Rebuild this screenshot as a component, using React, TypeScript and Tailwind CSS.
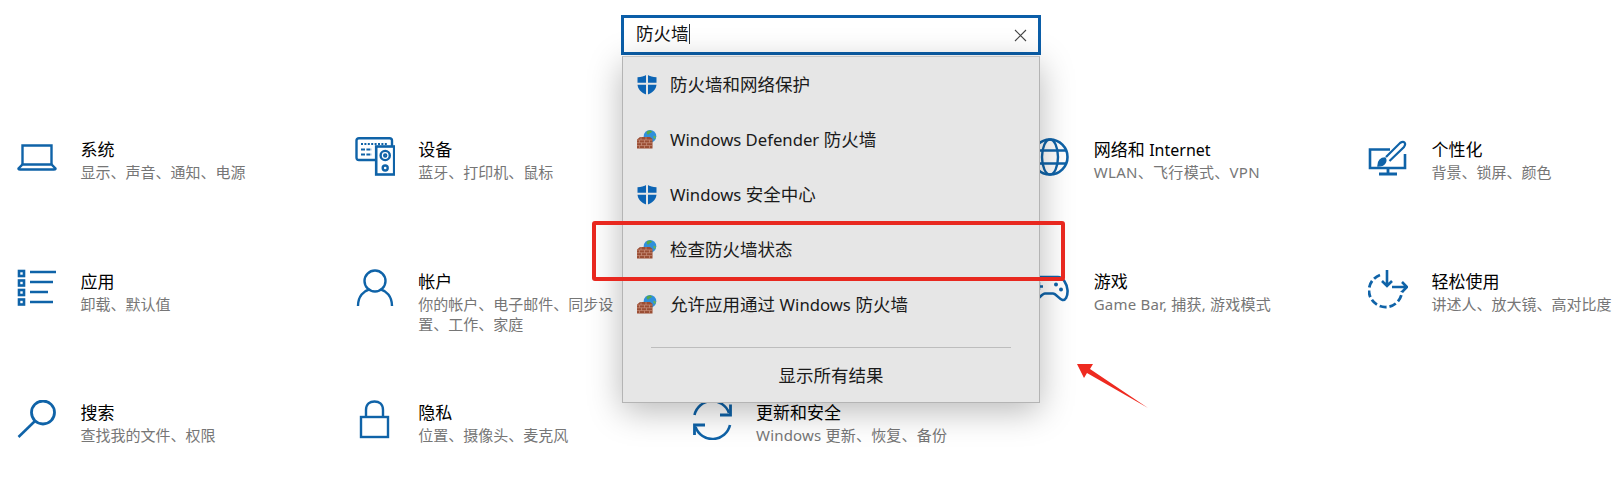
import React from "react";

const blue = "#0f63a8";

function Svg({ children }: { children: React.ReactNode }) {
  return (
    <svg width="40" height="40" viewBox="0 0 40 40" fill="none" stroke={blue} strokeWidth="2.4">
      {children}
    </svg>
  );
}

const Laptop = () => (
  <Svg>
    <path d="M5.5 27.5V8.5H34.5V27.5" />
    <path d="M5.5 27.5H34.5L38.5 31.5Q38.5 32.5 37 32.5H3Q1.5 32.5 1.5 31.5Z" />
  </Svg>
);
const Devices = () => (
  <Svg>
    <path d="M20 23H4Q1.5 23 1.5 20.5V3.5Q1.5 1.2 4 1.2H34.5Q37 1.2 37 3.5V9" />
    <path d="M6 7H33" strokeDasharray="2 1.4" strokeWidth="2.2" />
    <path d="M6 12.5H17M6 17.5H17" strokeDasharray="4 1.4" strokeWidth="2.2" />
    <rect x="21.2" y="9.5" width="18" height="28" fill="#fff" strokeWidth="2.6" />
    <circle cx="30.2" cy="18.5" r="4.6" />
    <circle cx="30.2" cy="18.5" r="1" />
    <circle cx="30.2" cy="31" r="2.5" />
  </Svg>
);
const Apps = () => (
  <Svg>
    <rect x="2" y="2" width="5" height="5" strokeWidth="2.6" />
    <rect x="2" y="11.5" width="5" height="5" strokeWidth="2.6" />
    <rect x="2" y="21" width="5" height="5" strokeWidth="2.6" />
    <rect x="2" y="30.5" width="5" height="5" strokeWidth="2.6" />
    <path d="M13 3H39M13 13H36M13 23H31M13 33H36" />
  </Svg>
);
const Search = () => (
  <Svg>
    <circle cx="26" cy="12.5" r="11.5" strokeWidth="2.8" />
    <path d="M18 21L1.5 37" strokeWidth="2.6" />
  </Svg>
);
const Person = () => (
  <Svg>
    <circle cx="20" cy="12" r="10.5" />
    <path d="M3 37C3 27 9 22 14 20.5M37 37C37 27 31 22 26 20.5" />
  </Svg>
);
const Lock = () => (
  <Svg>
    <rect x="6" y="17" width="27" height="20" />
    <path d="M11 17V10C11 4 15 1.5 19.5 1.5S28 4 28 10V17" />
  </Svg>
);
const Sync = () => (
  <Svg>
    <path d="M1.5 15A18 18 0 0 1 36 13" strokeWidth="2.6" />
    <path d="M37.5 4.5V15H27" strokeWidth="2.8" />
    <path d="M37 25A18 18 0 0 1 2.5 27" strokeWidth="2.6" />
    <path d="M1.5 35V25H12" strokeWidth="2.8" />
  </Svg>
);
const Globe = () => (
  <Svg>
    <circle cx="20" cy="20" r="17.5" strokeWidth="2.6" />
    <ellipse cx="20" cy="20" rx="8" ry="17.5" />
    <path d="M4 13.5H36M4 26.5H36" />
  </Svg>
);
const Pad = () => (
  <Svg>
    <path d="M10 8H28C33 8 37 15 37.5 21C38 28 35 31.5 32.5 31C29 30 26 24.5 23 24.5H15C12 24.5 9 30 6 31C3 31.5 1 28 1.5 21C2 15 5 8 10 8Z" strokeWidth="2.6" />
    <path d="M9 13V21M5 17.5H13" />
    <circle cx="26" cy="15.5" r="2" fill={blue} stroke="none" />
    <circle cx="31" cy="20.5" r="2" fill={blue} stroke="none" />
  </Svg>
);
const Brush = () => (
  <Svg>
    <path d="M22 12.5H2V31H37V17" strokeWidth="2.6" />
    <path d="M20 31V36M11 37H29" strokeWidth="2.8" />
    <path d="M10 29C10 24 13 21 17 21C19 24 17 29 10 29Z" fill={blue} strokeWidth="1.5" />
    <path d="M18 20L32 6Q35 4 36.5 5.5Q38 7 36 10L21.5 24" strokeWidth="2.2" />
  </Svg>
);
const Ease = () => (
  <Svg>
    <path d="M12 6A16.5 16.5 0 1 0 34 22" strokeWidth="2.8" strokeDasharray="7 3" />
    <path d="M19 1V17M14 12L19 17L24 12" strokeWidth="2.6" />
    <path d="M24 18H39M34 13L39 18L34 23" strokeWidth="2.6" />
  </Svg>
);

const Shield = () => (
  <svg width="20" height="21" viewBox="0 0 20 21">
    <path
      d="M10 0.5C7 2.5 4 3.2 0.5 3.2V10C0.5 15 4 18.8 10 20.8C16 18.8 19.5 15 19.5 10V3.2C16 3.2 13 2.5 10 0.5Z"
      fill="#0c64b4"
    />
    <path d="M9 0V21H11V0ZM0 8.8V10.8H20V8.8Z" fill="#e6e6e6" />
  </svg>
);

const Firewall = () => (
  <svg width="20" height="19" viewBox="0 0 20 19">
    <circle cx="13" cy="6.3" r="6.3" fill="#2f8fdc" />
    <path d="M10 1.2C12 0.2 14.5 0.4 15 1.8C14 3 12.5 2.8 11.5 4.5C10 5 9 3 10 1.2Z" fill="#57a84a" />
    <path d="M16.5 6C17.5 5.4 18.8 6.2 18.8 8C18 9.5 16 9 16.5 6Z" fill="#66b35a" />
    <path d="M0 9.5L3 7H13L15.5 9V18.5H0Z" fill="#9a4d33" />
    <path
      d="M0 10H15.5M0 12.8H15.5M0 15.6H15.5M4 7V10M9 7V10M2.5 10V12.8M7.5 10V12.8M12.5 10V12.8M4.5 12.8V15.6M9.5 12.8V15.6M2.5 15.6V18.5M7.5 15.6V18.5M12.5 15.6V18.5"
      stroke="#cc9480"
      strokeWidth="0.7"
      fill="none"
    />
  </svg>
);

function mixed(text: string, latinClass: string) {
  return text.split(/([A-Za-z]+(?: [A-Za-z]+)*)/).map((part, i) =>
    i % 2 === 1 ? (
      <span key={i} className={latinClass}>
        {part}
      </span>
    ) : (
      part
    ),
  );
}

type Cell = { icon: React.ReactNode; title: string; desc: string; track?: string } | null;

const cells: Cell[] = [
  { icon: <Laptop />, title: "系统", desc: "显示、声音、通知、电源" },
  { icon: <Devices />, title: "设备", desc: "蓝牙、打印机、鼠标" },
  null,
  { icon: <Globe />, title: "网络和 Internet", desc: "WLAN、飞行模式、VPN", track: "tracking-[0.3px]" },
  { icon: <Brush />, title: "个性化", desc: "背景、锁屏、颜色" },
  { icon: <Apps />, title: "应用", desc: "卸载、默认值" },
  { icon: <Person />, title: "帐户", desc: "你的帐户、电子邮件、同步设置、工作、家庭" },
  null,
  { icon: <Pad />, title: "游戏", desc: "Game Bar, 捕获, 游戏模式", track: "tracking-[0.2px]" },
  { icon: <Ease />, title: "轻松使用", desc: "讲述人、放大镜、高对比度" },
  { icon: <Search />, title: "搜索", desc: "查找我的文件、权限" },
  { icon: <Lock />, title: "隐私", desc: "位置、摄像头、麦克风" },
  { icon: <Sync />, title: "更新和安全", desc: "Windows 更新、恢复、备份", track: "tracking-[0.2px]" },
];

const results: { icon: React.ReactNode; label: string }[] = [
  { icon: <Shield />, label: "防火墙和网络保护" },
  { icon: <Firewall />, label: "Windows Defender 防火墙" },
  { icon: <Shield />, label: "Windows 安全中心" },
  { icon: <Firewall />, label: "检查防火墙状态" },
  { icon: <Firewall />, label: "允许应用通过 Windows 防火墙" },
];

export default function App() {
  return (
    <div className="relative h-[489px] w-[1624px] overflow-hidden bg-white font-['Noto_Sans','Noto_Sans_CJK_SC',sans-serif]">
      <div className="grid auto-rows-[131.5px] grid-cols-[repeat(4,337.75px)_1fr] pl-[17px] pt-[137px]">
        {cells.map((c, i) =>
          c ? (
            <div key={i} className="flex">
              <div className="h-10 w-[63.5px] shrink-0">{c.icon}</div>
              <div className="w-[200px] pt-px">
                <div className="whitespace-nowrap text-[17px] leading-6 text-black">
                  {mixed(c.title, "text-[16px]")}
                </div>
                <div className={`text-[15px] leading-5 text-[#767676] ${c.track ?? ""}`}>{c.desc}</div>
              </div>
            </div>
          ) : (
            <div key={i} />
          ),
        )}
      </div>

      <div className="absolute left-[621px] top-[15px] w-[420px]">
        <div className="flex h-10 items-center border-[3px] border-[#0b5ea8] bg-white pl-3 pr-[11px]">
          <span className="-mt-[4px] text-[17.5px] leading-6 text-[#111]">防火墙</span>
          <span className="-mt-[2px] h-5 w-px bg-[#333]" />
          <svg className="ml-auto" width="13" height="13" viewBox="0 0 13 13" stroke="#444" strokeWidth="1.1">
            <path d="M1 1L12 12M12 1L1 12" />
          </svg>
        </div>
        <div className="mx-px mt-px h-[347px] border border-[#b4b4b4] border-t-[#c4c4c4] bg-[#e6e6e6] shadow-[0_8px_32px_rgba(0,0,0,0.28)]">
          {results.map((r) => (
            <div key={r.label} className="flex h-[55px] items-center gap-[13px] pl-[14px]">
              <span className="flex w-5 justify-center">{r.icon}</span>
              <span className="-mt-px whitespace-nowrap text-[17.5px] text-[#1a1a1a]">
                {mixed(r.label, "text-[16.7px]")}
              </span>
            </div>
          ))}
          <div className="mx-[28px] mt-[15px] h-px bg-[#bdbdbd]" />
          <div className="flex h-[55px] items-center justify-center pb-px text-[17.5px] text-[#1a1a1a]">
            显示所有结果
          </div>
        </div>
      </div>

      <div className="absolute left-[592px] top-[221px] h-[60px] w-[473px] rounded-[3px] border-4 border-[#e8281f]" />

      <svg className="absolute left-[1070px] top-[355px]" width="85" height="60" viewBox="0 0 85 60">
        <polygon points="7,9 23,9 20,14 78,53 17,18 14,23" fill="#ee2a20" />
      </svg>
    </div>
  );
}
